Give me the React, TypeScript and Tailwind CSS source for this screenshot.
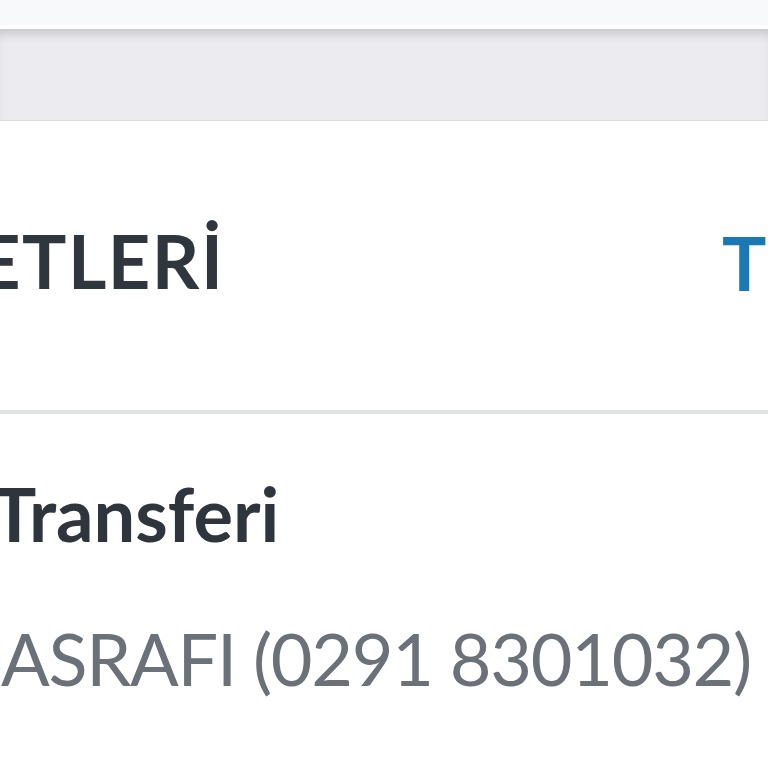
export default function App() {
  return (
    <div className="w-[768px] h-[768px] overflow-hidden bg-white flex flex-col" style={{ fontFamily: 'Lato, "Open Sans", sans-serif' }}>
      <div className="h-[29px] shrink-0 bg-[#f8f9fb] border-b-4 border-[#fdfdfe]" />
      <div className="h-[92px] shrink-0 bg-[#ebebf0] border-b border-[#dcdce0] shadow-[inset_0_10px_12px_-6px_rgba(0,0,0,0.18)]" />
      <div className="flex-1 flex flex-col">
        <div className="h-[293px] shrink-0 flex items-center justify-between pb-[10px] border-b-4 border-[#e2e3e5]">
          <h2 className="ml-[-22px] text-[74px] font-bold tracking-[0.02em] text-[#30363d] leading-none whitespace-nowrap">ETLERİ</h2>
          <span className="mt-[4px] w-[46px] overflow-hidden text-[74px] font-bold tracking-[0.02em] text-[#1a78b4] leading-none whitespace-nowrap">TÜMÜ</span>
        </div>
        <div className="flex flex-col pt-[63px]">
          <p className="ml-[-8px] text-[74px] font-bold text-[#2f353c] leading-none whitespace-nowrap">Transferi</p>
          <p className="ml-[1px] mt-[71px] text-[72px] font-normal tracking-[-0.018em] text-[#6b7178] leading-none whitespace-nowrap">ASRAFI (0291 8301032)</p>
        </div>
      </div>
    </div>
  );
}
